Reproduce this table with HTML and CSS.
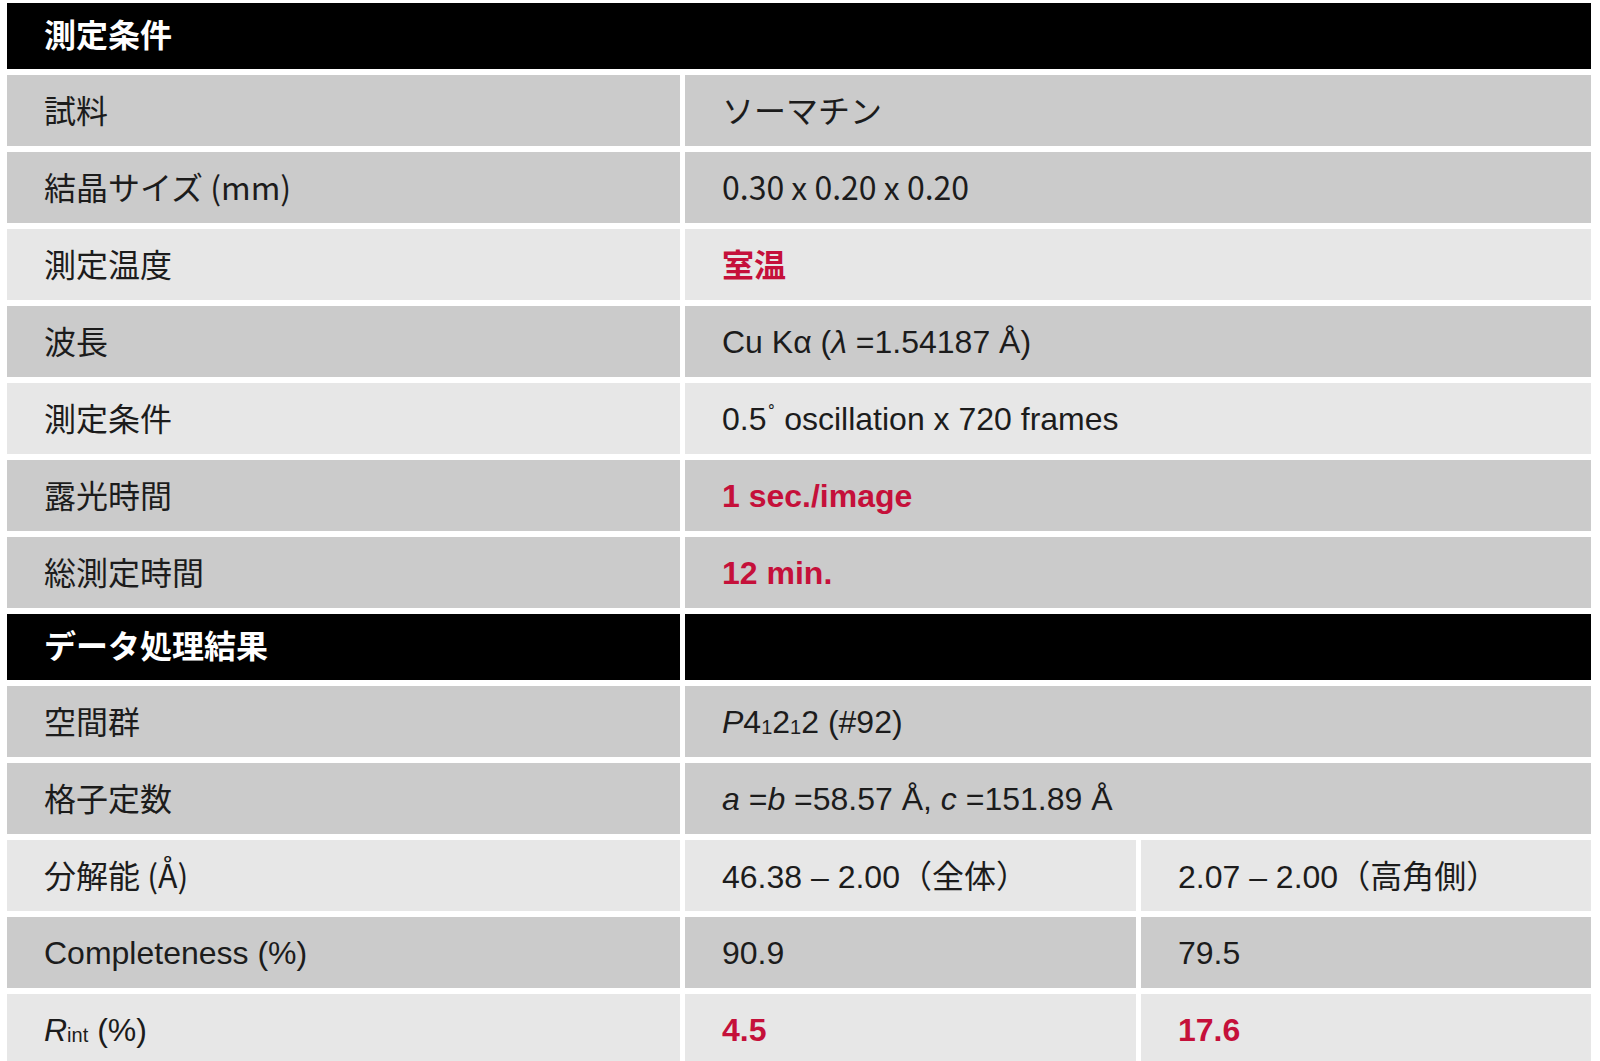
FILE: index.html
```html
<!DOCTYPE html>
<html lang="ja">
<head>
<meta charset="utf-8">
<title>測定条件</title>
<link rel="stylesheet" href="styles.css">
</head>
<body>
<div class="sheet">
  <div class="cell head span3"><span>測定条件</span></div>

  <div class="cell dark jp"><span>試料</span></div>
  <div class="cell dark span2 jp"><span>ソーマチン</span></div>

  <div class="cell dark jp"><span>結晶サイズ (mm)</span></div>
  <div class="cell dark span2 jp"><span>0.30 x 0.20 x 0.20</span></div>

  <div class="cell light jp"><span>測定温度</span></div>
  <div class="cell light span2 jp red"><span>室温</span></div>

  <div class="cell dark jp"><span>波長</span></div>
  <div class="cell dark span2"><span>Cu Kα (<i>λ</i> =1.54187 Å)</span></div>

  <div class="cell light jp"><span>測定条件</span></div>
  <div class="cell light span2"><span>0.5<span class="deg">˚</span>oscillation x 720 frames</span></div>

  <div class="cell dark jp"><span>露光時間</span></div>
  <div class="cell dark span2 red"><span>1 sec./image</span></div>

  <div class="cell dark jp"><span>総測定時間</span></div>
  <div class="cell dark span2 red"><span>12 min.</span></div>

  <div class="cell head"><span>データ処理結果</span></div>
  <div class="cell head span2"></div>

  <div class="cell dark jp"><span>空間群</span></div>
  <div class="cell dark span2"><span><i>P</i>4<span class="sub">1</span>2<span class="sub">1</span>2 (#92)</span></div>

  <div class="cell dark jp"><span>格子定数</span></div>
  <div class="cell dark span2"><span><i>a</i> =<i>b</i> =58.57 Å, <i>c</i> =151.89 Å</span></div>

  <div class="cell light jp"><span>分解能 (Å)</span></div>
  <div class="cell light"><span>46.38 – 2.00<span class="jp">（全体）</span></span></div>
  <div class="cell light"><span>2.07 – 2.00<span class="jp">（高角側）</span></span></div>

  <div class="cell dark"><span>Completeness (%)</span></div>
  <div class="cell dark"><span>90.9</span></div>
  <div class="cell dark"><span>79.5</span></div>

  <div class="cell light"><span><i>R</i><span class="sub">int</span> (%)</span></div>
  <div class="cell light red"><span>4.5</span></div>
  <div class="cell light red"><span>17.6</span></div>
</div>
</body>
</html>
```

FILE: styles.css
```css
html, body {
  margin: 0;
  padding: 0;
  background: #ffffff;
}

body {
  font-family: "Liberation Sans", Arial, "Noto Sans CJK JP", sans-serif;
  font-size: 32px;
  color: #1c1c1c;
}

.sheet {
  display: grid;
  grid-template-columns: 673px 451px 450px;
  grid-template-rows: 66px repeat(7, 71px) 66px repeat(5, 71px);
  gap: 6px 5px;
  padding: 3px 0 0 7px;
  width: 1584px;
}

.cell {
  display: flex;
  align-items: center;
  padding: 0 0 0 37px;
  box-sizing: border-box;
  line-height: 1;
  white-space: nowrap;
}

.span2 { grid-column: span 2; }
.span3 { grid-column: span 3; }

.head {
  background: #000000;
  color: #ffffff;
  font-family: "Noto Sans CJK JP", sans-serif;
  font-weight: 700;
  padding-bottom: 6px;
}

.dark { background: #cbcbcb; }
.light { background: #e7e7e7; }

.jp {
  font-family: "Noto Sans CJK JP", sans-serif;
}

.cell.jp {
  padding-bottom: 4px;
}

.red {
  color: #c5103a;
  font-weight: 700;
}

.deg {
  font-size: 20px;
  position: relative;
  top: -9px;
  margin: 0 9px 0 2px;
}

.sub {
  font-size: 20px;
  position: relative;
  top: 1px;
}

i { font-style: italic; }
```
